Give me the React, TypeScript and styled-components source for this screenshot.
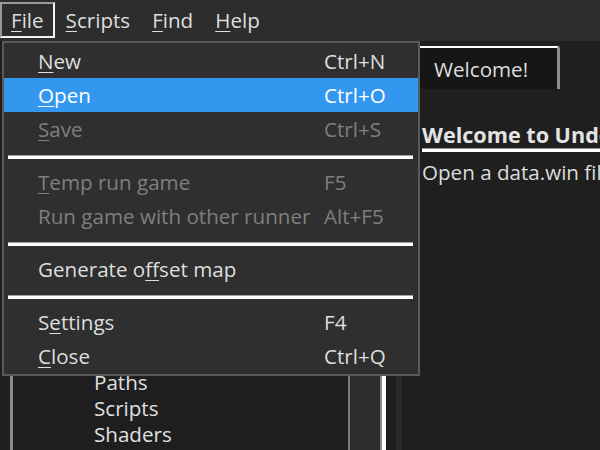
import React from "react";
import styled, { createGlobalStyle } from "styled-components";

const Global = createGlobalStyle`
  html, body { margin: 0; padding: 0; background: #1f1f1f; }
  body { font-family: "Open Sans", "Noto Sans", sans-serif; }
  * { box-sizing: border-box; }
`;

const Frame = styled.div`
  position: relative;
  width: 600px;
  height: 450px;
  overflow: hidden;
  background: #1f1f1f;
  color: #dcdcdc;
  font-size: 20.6px;
`;

const MenuBar = styled.div`
  display: flex;
  align-items: flex-start;
  height: 41px;
  padding-top: 2px;
  background: #2d2d2d;
`;

const BarItem = styled.div<{ $active?: boolean }>`
  height: 36px;
  display: flex;
  align-items: center;
  padding: 0 9px 0 9px;
  border: 2px solid transparent;
  border-color: ${(p) =>
    p.$active ? "#9a9a9a #f2f2f2 #f2f2f2 #9a9a9a" : "transparent"};
  color: #dedede;
  white-space: nowrap;
`;

const Key = styled.u`
  text-decoration-thickness: 1px;
  text-underline-offset: 3px;
`;

const Body = styled.div`
  display: flex;
  height: 409px;
`;

const LeftColumn = styled.div`
  display: flex;
  padding: 6px 0 0 10px;
  width: 386px;
  flex-shrink: 0;
`;

const TreeFrame = styled.div`
  display: flex;
  flex: 1;
  border-top: 2px solid #8a8a8a;
  border-left: 3px solid #8a8a8a;
  border-right: 4px solid #ffffff;
  background: #1e1e1e;
`;

const TreeList = styled.div`
  flex: 1;
  padding-top: 8px;
  overflow: hidden;
`;

const TreeRow = styled.div<{ $depth: number }>`
  height: 26px;
  line-height: 26px;
  padding-left: ${(p) => 20 + p.$depth * 61}px;
  color: #e0e0e0;
  white-space: nowrap;
`;

const ScrollTrack = styled.div`
  width: 34px;
  background: #2d2d2d;
  border-left: 2px solid #7a7a7a;
  border-right: 2px solid #8a8a8a;
`;

const Gap = styled.div`
  width: 10px;
  background: #1e1e1e;
`;

const Splitter = styled.div`
  width: 6px;
  background: #2a2a2a;
`;

const RightPane = styled.div`
  flex: 1;
  display: flex;
  flex-direction: column;
  min-width: 0;
  background: #1f1f1f;
`;

const TabStrip = styled.div`
  height: 48px;
  display: flex;
  align-items: flex-end;
  padding-left: 8px;
`;

const Tab = styled.div`
  height: 43px;
  display: flex;
  align-items: center;
  padding: 0 29px 0 24px;
  background: #161616;
  border-top: 2px solid #ffffff;
  border-right: 3px solid #8f8f8f;
  border-top-right-radius: 3px;
  color: #dedede;
  white-space: nowrap;
`;

const Content = styled.div`
  padding: 31px 0 0 20px;
  white-space: nowrap;
`;

const Heading = styled.div`
  font-weight: 700;
  font-size: 21.6px;
  line-height: 29px;
  color: #e4e4e4;
  border-bottom: 3px solid #ffffff;
  box-shadow: inset 0 -1px 0 #9a9a9a;
`;

const Para = styled.div`
  margin-top: 7px;
  line-height: 26px;
  color: #dcdcdc;
`;

const Popup = styled.div`
  position: absolute;
  left: 2px;
  top: 41px;
  width: 418px;
  padding: 1px 0;
  background: #2f2f2f;
  border: 2px solid #5a5a5a;
`;

const Item = styled.div<{ $hot?: boolean; $disabled?: boolean }>`
  display: grid;
  grid-template-columns: 286px 1fr;
  align-items: center;
  height: 34px;
  padding-left: 34px;
  padding-bottom: 1px;
  white-space: nowrap;
  background: ${(p) => (p.$hot ? "#3397f0" : "transparent")};
  color: ${(p) => (p.$hot ? "#ffffff" : p.$disabled ? "#7f7f7f" : "#dedede")};
`;

const Separator = styled.div`
  height: 19px;
  padding: 9px 5px 0 4px;
  &::after {
    content: "";
    display: block;
    height: 3px;
    border-top: 1px solid #a0a0a0;
    background: #ffffff;
  }
`;

type Entry =
  | { sep: true }
  | {
      sep?: false;
      pre: string;
      key: string;
      post: string;
      shortcut?: string;
      hot?: boolean;
      disabled?: boolean;
    };

const entries: Entry[] = [
  { pre: "", key: "N", post: "ew", shortcut: "Ctrl+N" },
  { pre: "", key: "O", post: "pen", shortcut: "Ctrl+O", hot: true },
  { pre: "", key: "S", post: "ave", shortcut: "Ctrl+S", disabled: true },
  { sep: true },
  { pre: "", key: "T", post: "emp run game", shortcut: "F5", disabled: true },
  { pre: "Run game with other runner", key: "", post: "", shortcut: "Alt+F5", disabled: true },
  { sep: true },
  { pre: "Generate o", key: "f", post: "fset map" },
  { sep: true },
  { pre: "S", key: "e", post: "ttings", shortcut: "F4" },
  { pre: "", key: "C", post: "lose", shortcut: "Ctrl+Q" },
];

const tree: [string, number][] = [
  ["Data", 0],
  ["General info", 1],
  ["Global init", 1],
  ["Game End scripts", 1],
  ["Audio groups", 1],
  ["Sounds", 1],
  ["Sprites", 1],
  ["Backgrounds & Tile sets", 1],
  ["Code", 1],
  ["Variables", 1],
  ["Functions", 1],
  ["Code locals", 1],
  ["Paths", 1],
  ["Scripts", 1],
  ["Shaders", 1],
  ["Fonts", 1],
];

export default function App() {
  return (
    <Frame>
      <Global />
      <MenuBar>
        <BarItem $active>
          <Key>F</Key>ile
        </BarItem>
        <BarItem>
          <Key>S</Key>cripts
        </BarItem>
        <BarItem>
          <Key>F</Key>ind
        </BarItem>
        <BarItem>
          <Key>H</Key>elp
        </BarItem>
      </MenuBar>
      <Body>
        <LeftColumn>
          <TreeFrame>
            <TreeList>
              {tree.map(([name, depth]) => (
                <TreeRow key={name} $depth={depth}>
                  {name}
                </TreeRow>
              ))}
            </TreeList>
            <ScrollTrack />
          </TreeFrame>
        </LeftColumn>
        <Gap />
        <Splitter />
        <RightPane>
          <TabStrip>
            <Tab>Welcome!</Tab>
          </TabStrip>
          <Content>
            <Heading>Welcome to UndertaleModTool!</Heading>
            <Para>
              Open a data.win file to get started, then double click on the
              items on the left to view them.
            </Para>
          </Content>
        </RightPane>
      </Body>
      <Popup>
        {entries.map((e, i) =>
          e.sep ? (
            <Separator key={i} />
          ) : (
            <Item key={i} $hot={e.hot} $disabled={e.disabled}>
              <span>
                {e.pre}
                {e.key && <Key>{e.key}</Key>}
                {e.post}
              </span>
              <span>{e.shortcut}</span>
            </Item>
          )
        )}
      </Popup>
    </Frame>
  );
}
